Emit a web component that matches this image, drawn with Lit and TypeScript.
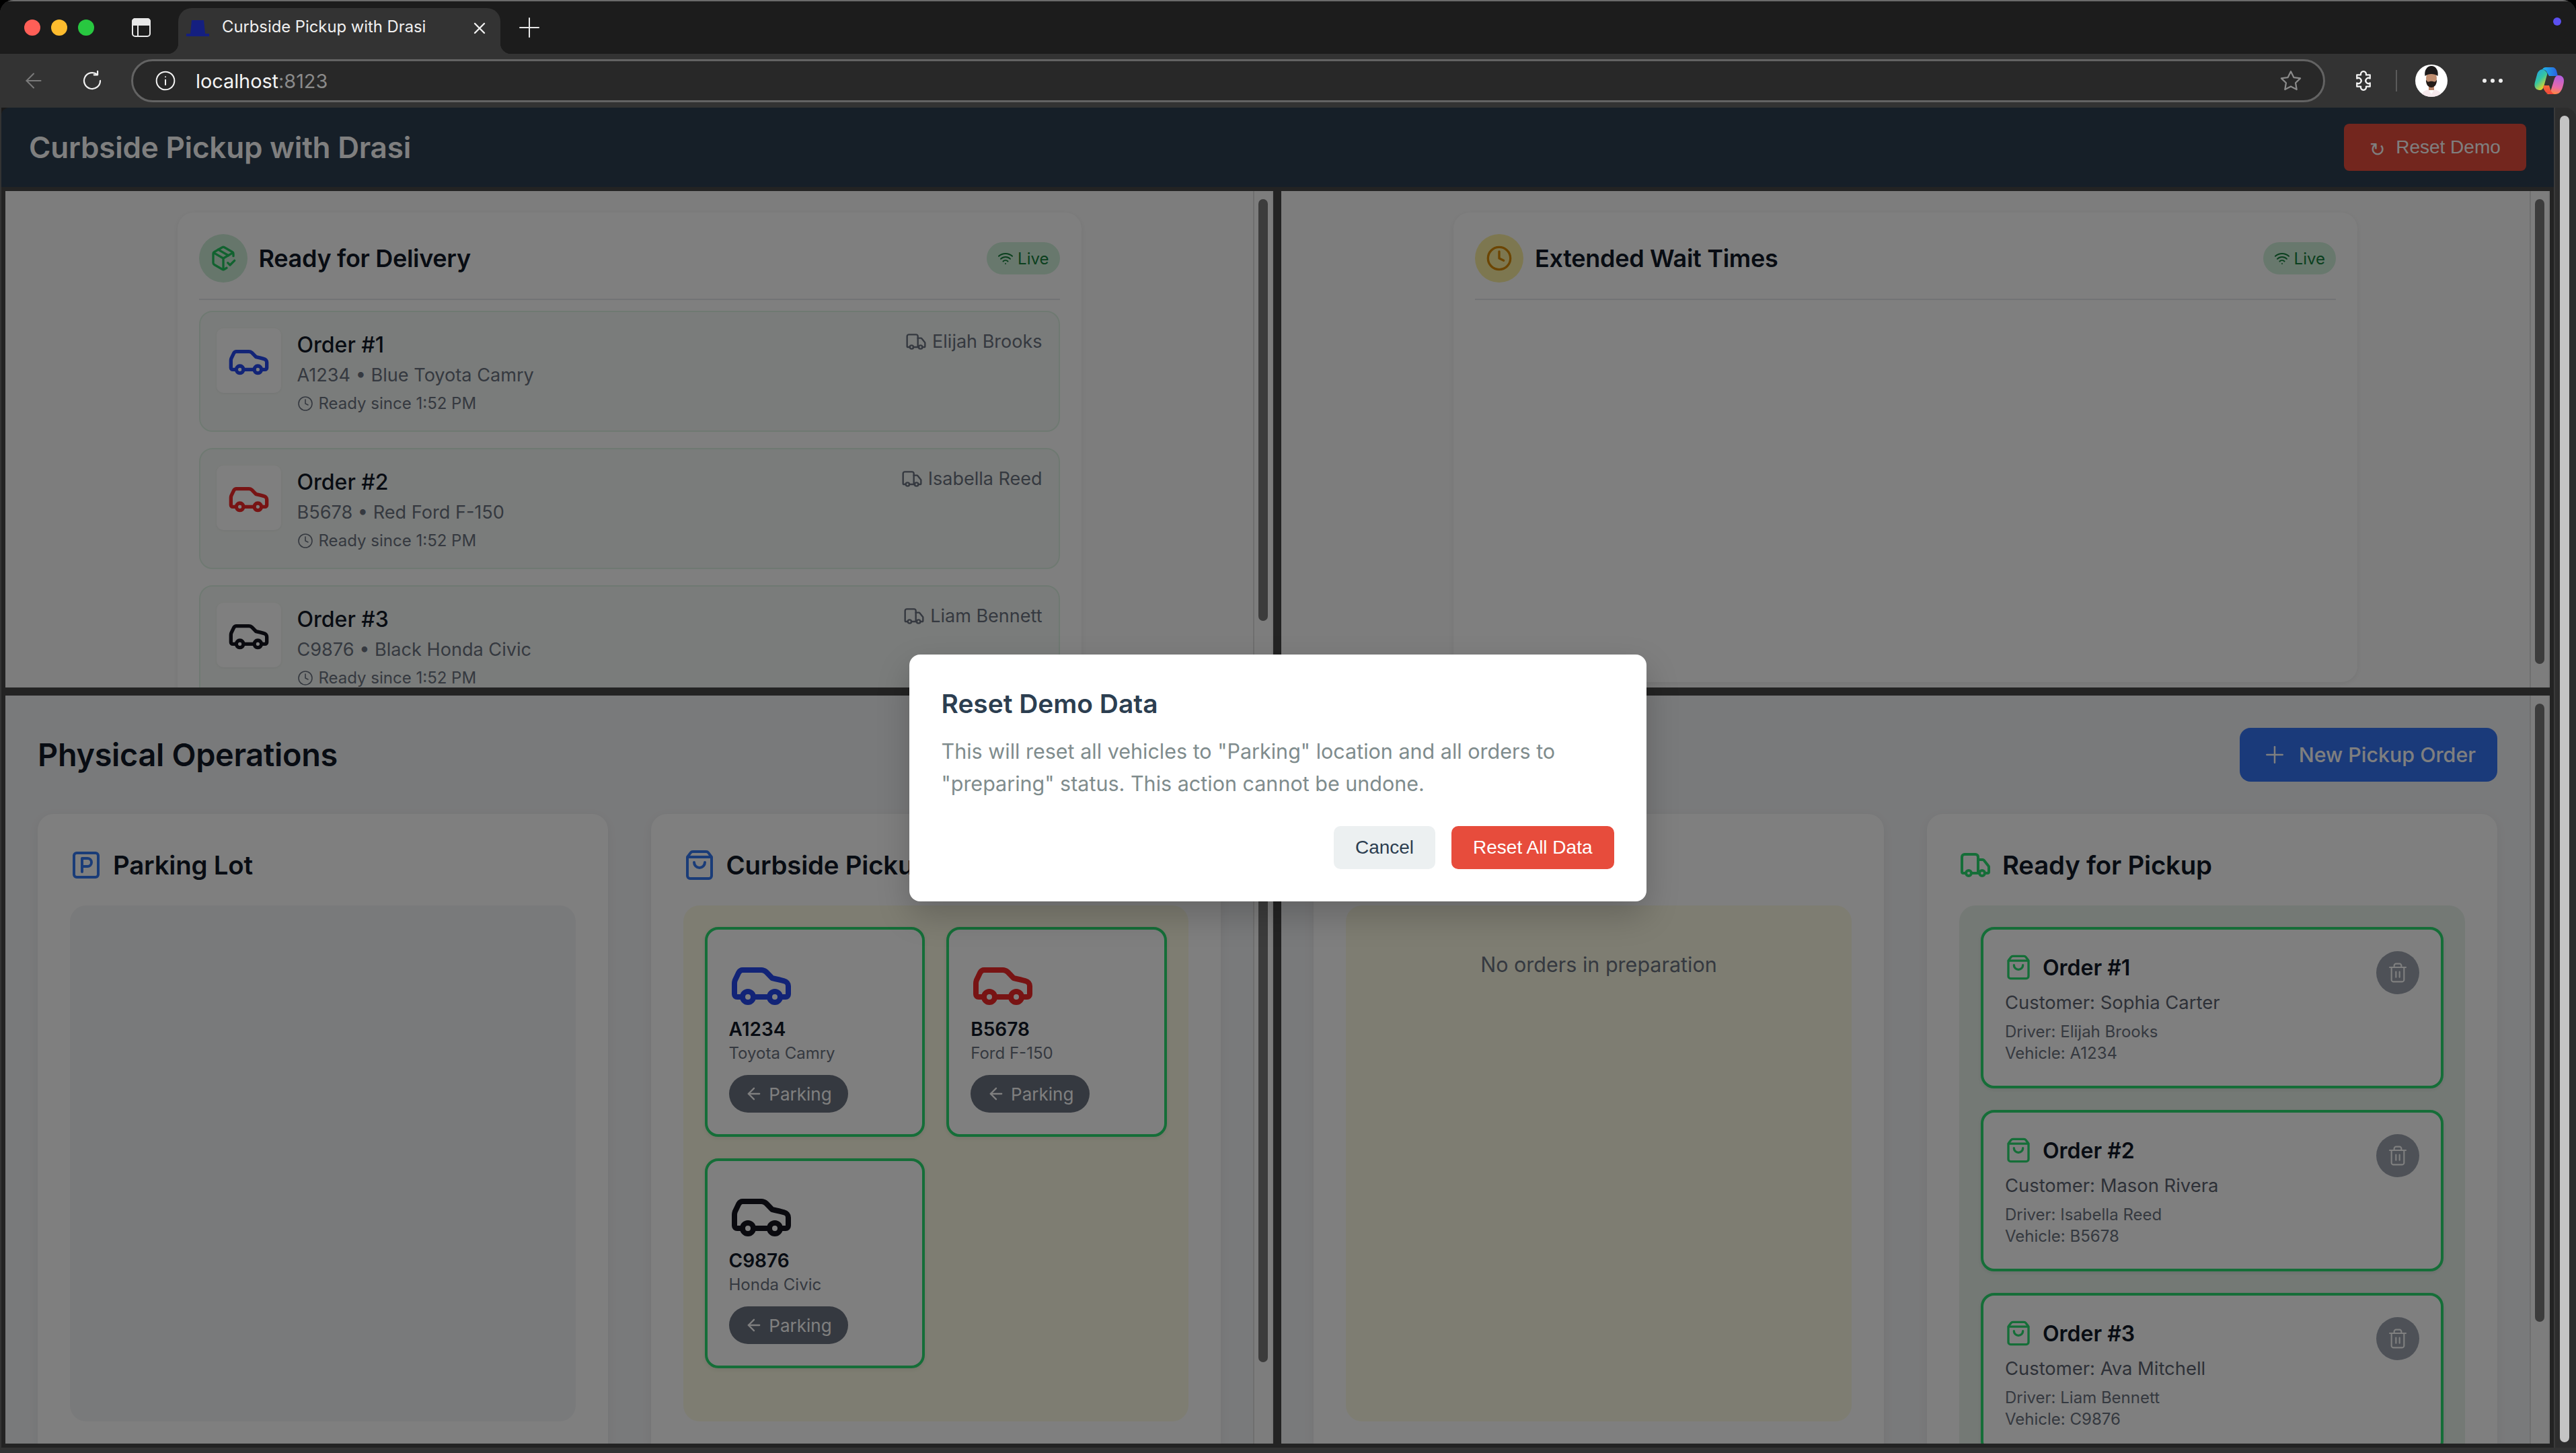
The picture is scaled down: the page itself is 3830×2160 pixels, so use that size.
import { LitElement, html, css, svg } from "lit";
import { customElement } from "lit/decorators.js";

const ICONS: Record<string, unknown> = {
  car: svg`<path d="M19 17h2c.6 0 1-.4 1-1v-3c0-.9-.7-1.7-1.5-1.9C18.7 10.6 16 10 16 10s-1.3-1.4-2.2-2.3c-.5-.4-1.1-.7-1.8-.7H5c-.6 0-1.1.4-1.4.9l-1.4 2.9A3.7 3.7 0 0 0 2 12v4c0 .6.4 1 1 1h2"/><circle cx="7" cy="17" r="2"/><path d="M9 17h6"/><circle cx="17" cy="17" r="2"/>`,
  bag: svg`<path d="M16 10a4 4 0 0 1-8 0"/><path d="M3.103 6.034h17.794"/><path d="M3.4 5.467a2 2 0 0 0-.4 1.2V20a2 2 0 0 0 2 2h14a2 2 0 0 0 2-2V6.667a2 2 0 0 0-.4-1.2l-2-2.667A2 2 0 0 0 17 2H7a2 2 0 0 0-1.6.8z"/>`,
  truck: svg`<path d="M14 18V6a2 2 0 0 0-2-2H4a2 2 0 0 0-2 2v11a1 1 0 0 0 1 1h2"/><path d="M15 18H9"/><path d="M19 18h2a1 1 0 0 0 1-1v-3.65a1 1 0 0 0-.22-.624l-3.48-4.35A1 1 0 0 0 17.52 8H14"/><circle cx="17" cy="18" r="2"/><circle cx="7" cy="18" r="2"/>`,
  clock: svg`<circle cx="12" cy="12" r="10"/><polyline points="12 6 12 12 16 14"/>`,
  wifi: svg`<path d="M12 20h.01"/><path d="M2 8.82a15 15 0 0 1 20 0"/><path d="M5 12.859a10 10 0 0 1 14 0"/><path d="M8.5 16.429a5 5 0 0 1 7 0"/>`,
  pack: svg`<path d="m16 16 2 2 4-4"/><path d="M21 10V8a2 2 0 0 0-1-1.73l-7-4a2 2 0 0 0-2 0l-7 4A2 2 0 0 0 3 8v8a2 2 0 0 0 1 1.73l7 4a2 2 0 0 0 2 0l2-1.14"/><path d="m7.5 4.27 9 5.15"/><path d="M3.29 7 12 12l8.71-5"/><path d="M12 22V12"/>`,
  trash: svg`<path d="M3 6h18"/><path d="M19 6v14c0 1-1 2-2 2H7c-1 0-2-1-2-2V6"/><path d="M8 6V4c0-1 1-2 2-2h4c1 0 2 1 2 2v2"/><line x1="10" x2="10" y1="11" y2="17"/><line x1="14" x2="14" y1="11" y2="17"/>`,
  arrow: svg`<path d="m12 19-7-7 7-7"/><path d="M19 12H5"/>`,
  plus: svg`<path d="M5 12h14"/><path d="M12 5v14"/>`,
  park: svg`<rect width="18" height="18" x="3" y="3" rx="2"/><path d="M9 17V7h4a3 3 0 0 1 0 6H9"/>`,
  reload: svg`<path d="M20 12a8 8 0 1 1-3-6.2"/><path d="M17.4 2.6v3.6h-3.6"/>`,
  info: svg`<circle cx="12" cy="12" r="10"/><path d="M12 16.5v-5.5"/><path d="M12 7.6h.01"/>`,
  star: svg`<path d="M12 2.8l2.9 5.9 6.5.9-4.7 4.6 1.1 6.5-5.8-3.1-5.8 3.1 1.1-6.5-4.7-4.6 6.5-.9z"/>`,
  puzzle: svg`<path d="M5.5 6.2h3.9a2.7 2.7 0 1 1 5.2 0h3.9v3.6a2.7 2.7 0 1 0 0 4.4v3.6h-3.9a2.7 2.7 0 1 1-5.2 0H5.5v-3.6a2.7 2.7 0 1 0 0-4.4z"/>`,
};

const icon = (name: string, cls = "") =>
  html`<svg class="ic ${cls}" viewBox="0 0 24 24" fill="none" stroke="currentColor" stroke-width="2" stroke-linecap="round" stroke-linejoin="round">${ICONS[name]}</svg>`;

const ORDERS = [
  { id: 1, plate: "A1234", color: "Blue", model: "Toyota Camry", cls: "blue", driver: "Elijah Brooks", customer: "Sophia Carter" },
  { id: 2, plate: "B5678", color: "Red", model: "Ford F-150", cls: "red", driver: "Isabella Reed", customer: "Mason Rivera" },
  { id: 3, plate: "C9876", color: "Black", model: "Honda Civic", cls: "black", driver: "Liam Bennett", customer: "Ava Mitchell" },
];

@customElement("app-root")
export class AppRoot extends LitElement {
  static styles = css`
    :host { display: block; width: 3830px; height: 2160px; overflow: hidden; background: #000; font-family: Inter, "Liberation Sans", sans-serif; }
    * { box-sizing: border-box; }
    .ic { display: block; flex: none; }
    .window { width: 3830px; height: 2160px; display: flex; flex-direction: column; background: #333; border-radius: 20px 20px 0 0; overflow: hidden; }

    .tabs { height: 80px; flex: none; display: flex; align-items: center; background: #1c1c1c; border-top: 2px solid #6a6a6a; }
    .light { width: 24px; height: 24px; border-radius: 50%; margin-right: 16px; flex: none; }
    .light.r { background: #ff5f57; margin-left: 36px; }
    .light.y { background: #febc2e; }
    .light.g { background: #28c840; }
    .side { width: 28px; height: 28px; margin-left: 40px; flex: none; color: #e8e8e8; }
    .tab { position: relative; align-self: flex-end; margin-left: 41px; width: 479px; height: 68px; background: #333; border-radius: 20px 20px 0 0; display: flex; align-items: center; padding-left: 12px; color: #f0f0f0; flex: none; }
    .tab::before, .tab::after { content: ""; position: absolute; bottom: 0; width: 16px; height: 16px; }
    .tab::before { left: -16px; background: radial-gradient(circle at 0 0, #1c1c1c 16px, #333 16.5px); }
    .tab::after { right: -16px; background: radial-gradient(circle at 100% 0, #1c1c1c 16px, #333 16.5px); }
    .fav { width: 34px; height: 24px; flex: none; margin-bottom: 8px; }
    .tab-title { margin-left: 19px; font-size: 23.8px; flex: 1; white-space: nowrap; margin-bottom: 13px; }
    .tab-x { width: 24px; height: 24px; margin: 0 19px 8px 0; flex: none; }
    .new { width: 32px; height: 32px; margin-left: 27px; color: #e8e8e8; flex: none; }
    .pdot { width: 12px; height: 12px; border-radius: 50%; background: #5b50f0; margin: -18px 22px 0 auto; }

    .toolbar { height: 80px; flex: none; display: flex; align-items: center; background: #333; padding: 0 18px 0 32px; }
    .back { width: 36px; height: 36px; color: #7a7a7a; stroke-width: 1.4; }
    .reload { width: 36px; height: 36px; margin-left: 51px; color: #f0f0f0; stroke-width: 1.5; }
    .url { flex: 1; height: 64px; margin-left: 40px; border: 3px solid #636363; border-radius: 32px; background: #282828; display: flex; align-items: center; padding: 0 30px 0 32px; font-size: 28.8px; color: #f4f4f4; }
    .url .info { width: 32px; height: 32px; stroke-width: 1.5; margin-right: 29px; }
    .url .port { color: #8a8a8a; }
    .url .star { width: 36px; height: 36px; margin-left: auto; color: #8a8a8a; stroke-width: 1.5; }
    .puzzle { width: 36px; height: 36px; margin-left: 39px; color: #f4f4f4; stroke-width: 1.5; }
    .sep { width: 2px; height: 32px; margin-left: 30px; background: #5a5a5a; flex: none; }
    .avatar { width: 48px; height: 48px; margin-left: 27px; flex: none; }
    .dots { display: flex; gap: 6px; margin-left: 52px; flex: none; }
    .dots i { width: 6px; height: 6px; border-radius: 50%; background: #eee; }
    .copilot { width: 44px; height: 40px; margin-left: 47px; flex: none; }

    .body { flex: 1; min-height: 0; display: flex; position: relative; }
    .page { width: 3795px; height: 1992px; margin-left: 2px; background: #464646; display: flex; flex-direction: column; flex: none; border-radius: 12px 0 0 0; overflow: hidden; }
    .outer-bar { flex: 1; height: 1992px; background: #2d2d2d; border-left: 2px solid #3a3a3a; padding: 12px 0 8px 7px; border-radius: 0 16px 0 0; }
    .outer-bar i { display: block; width: 14px; height: 100%; border-radius: 7px; background: #c4c4c4; }

    .app-head { height: 118px; flex: none; background: #2c3e50; display: flex; align-items: center; justify-content: space-between; padding: 0 41px; }
    .app-head h1 { margin: 0; font-size: 44px; font-weight: 600; color: #fff; letter-spacing: -0.2px; }
    .reset { height: 70px; width: 271px; border: 0; border-radius: 8px; background: #e74c3c; color: #fff; font: 28px "Liberation Sans", Arial, sans-serif; display: flex; align-items: center; justify-content: center; gap: 16px; padding: 0; }
    .reset span { font-size: 28px; padding-top: 6px; }

    .panes { flex: 1; min-height: 0; display: grid; grid-template-columns: 1885px 1886px; grid-template-rows: 738px 1112px; gap: 12px; padding: 6px; }
    .pane { display: flex; overflow: hidden; min-width: 0; min-height: 0; }
    .scroll { flex: 1; min-width: 0; overflow: hidden; }
    .top .scroll { background: #fbfbfb; padding-top: 32px; }
    .bottom .scroll { background: #f3f4f6; padding: 48px 48px 0; }
    .track { width: 30px; flex: none; background: #fbfbfb; border-left: 2px solid #dedede; border-right: 2px solid #eeeeee; padding: 12px 0 0 6px; }
    .thumb { width: 14px; border-radius: 7px; background: #787878; }

    .card { width: 1344px; margin: 0 auto; background: #fff; border-radius: 24px; padding: 32px; box-shadow: 0 2px 10px rgba(0,0,0,.07); min-height: 698px; }
    .card-head { display: flex; align-items: center; padding-bottom: 24px; border-bottom: 2px solid #e5e7eb; margin-bottom: 16px; }
    .circle { width: 72px; height: 72px; border-radius: 50%; display: flex; align-items: center; justify-content: center; margin-right: 17px; flex: none; }
    .circle.green { background: #cdecd7; color: #22c55e; }
    .circle.yellow { background: #fbefa0; color: #d98a04; }
    .circle .ic { width: 40px; height: 40px; }
    .card-head h2 { margin: 0; font-size: 36px; font-weight: 600; color: #111827; letter-spacing: -0.3px; }
    .live { margin-left: auto; height: 48px; padding: 0 16px; border-radius: 24px; background: #d0f0da; color: #16803d; display: flex; align-items: center; gap: 6px; font-size: 24px; font-weight: 400; }
    .live .ic { width: 24px; height: 24px; }

    .item { height: 180px; margin-bottom: 24px; border: 2px solid #dff3e4; border-radius: 20px; background: #f5f9f6; padding: 24px; display: flex; }
    .thumbbox { width: 96px; height: 96px; background: #fff; border-radius: 10px; box-shadow: 0 1px 4px rgba(0,0,0,.06); display: flex; align-items: center; justify-content: center; flex: none; margin-right: 24px; }
    .thumbbox .ic { width: 64px; height: 64px; }
    .blue { color: #2448ef; }
    .red { color: #f02828; }
    .black { color: #14141f; }
    .item-main { flex: 1; min-width: 0; }
    .item-title { font-size: 32px; line-height: 49px; font-weight: 500; color: #111827; }
    .item-sub { font-size: 27.1px; line-height: 41px; color: #6b7280; }
    .item-time { font-size: 24px; line-height: 32px; margin-top: 6px; color: #6b7280; display: flex; align-items: center; gap: 8px; }
    .item-time .ic { width: 24px; height: 24px; stroke-width: 1.6; }
    .item-driver { font-size: 27px; line-height: 40px; color: #6b7280; display: flex; align-items: center; gap: 8px; align-self: flex-start; }
    .item-driver .ic { width: 32px; height: 32px; stroke-width: 1.8; }

    .bar { height: 80px; display: flex; align-items: center; justify-content: space-between; margin-bottom: 48px; }
    .bar.end { justify-content: flex-end; }
    .bar h2 { margin: 0; font-size: 46.8px; font-weight: 600; color: #111827; letter-spacing: -0.3px; }
    .add { height: 80px; border: 0; border-radius: 16px; padding: 0 32px; background: #3575f5; color: #fff; display: flex; align-items: center; gap: 16px; font: 500 30.4px Inter, sans-serif; }
    .add .ic { width: 40px; height: 40px; stroke-width: 1.5; }
    .cols { display: grid; grid-template-columns: 1fr 1fr; gap: 64px; }
    .col { background: #fff; border-radius: 24px; padding: 48px; box-shadow: 0 4px 16px rgba(0,0,0,.06); height: 960px; }
    .col-head { height: 56px; display: flex; align-items: center; gap: 16px; margin-bottom: 32px; }
    .col-head .ic { width: 48px; height: 48px; }
    .col-head h3 { margin: 0; font-size: 38.4px; font-weight: 600; color: #111827; white-space: nowrap; letter-spacing: -0.2px; }
    .col-head .pk { color: #3578f0; }
    .col-head .gr { color: #2adc70; }
    .zone { height: 767px; border-radius: 24px; padding: 32px; overflow: hidden; }
    .zone.gray { background: #f3f4f6; }
    .zone.yellow { background: #fcfbe4; }
    .zone.green { background: #e9f3eb; height: 840px; }
    .vehicles { display: grid; grid-template-columns: 1fr 1fr; gap: 32px; }
    .vehicle { height: 312px; background: #fff; border: 4px solid #2adc70; border-radius: 20px; padding: 32px; box-shadow: 0 2px 6px rgba(0,0,0,.08); }
    .vehicle > .ic { width: 96px; height: 96px; }
    .plate { font-size: 28px; line-height: 40px; font-weight: 600; color: #111827; }
    .model { font-size: 24px; line-height: 32px; color: #6b7280; }
    .pill { height: 56px; margin-top: 16px; width: 177px; border: 0; border-radius: 28px; background: #6b7280; color: #fff; display: flex; align-items: center; justify-content: center; gap: 8px; font: 26px Inter, sans-serif; padding: 0; }
    .pill .ic { width: 28px; height: 28px; }
    .empty { text-align: center; font-size: 30.5px; line-height: 48px; color: #6b7280; padding-top: 32px; }
    .order { height: 240px; background: #fff; border: 4px solid #2adc70; border-radius: 20px; padding: 32px; margin-bottom: 32px; display: flex; box-shadow: 0 2px 6px rgba(0,0,0,.08); }
    .order-main { flex: 1; min-width: 0; }
    .order-head { height: 48px; display: flex; align-items: center; gap: 16px; font-size: 32px; font-weight: 600; color: #111827; }
    .order-head .ic { width: 40px; height: 40px; color: #2adc70; }
    .cust { font-size: 27.4px; line-height: 40px; margin-top: 8px; color: #5c6370; }
    .meta { font-size: 24px; line-height: 32px; color: #6b7280; }
    .meta.first { margin-top: 8px; }
    .del { width: 64px; height: 64px; border: 0; border-radius: 50%; background: #9ca3af; color: #fff; display: flex; align-items: center; justify-content: center; flex: none; padding: 0; }
    .del .ic { width: 32px; height: 32px; stroke-width: 1.6; }

    .overlay { position: absolute; left: 2px; top: 0; width: 3795px; height: 1992px; background: rgba(0,0,0,.5); display: flex; align-items: center; justify-content: center; }
    .dialog { width: 1096px; height: 367px; background: #fff; border-radius: 16px; padding: 48px; box-shadow: 0 20px 50px rgba(0,0,0,.2); display: flex; flex-direction: column; }
    .dialog h2 { margin: 0 0 22px; font-size: 38.9px; line-height: 50px; font-weight: 600; color: #2c3e50; }
    .dialog p { margin: 0; font-size: 30.5px; line-height: 48px; color: #7f8c8d; }
    .actions { margin-top: 39px; display: flex; justify-content: flex-end; gap: 24px; }
    .actions button { height: 64px; padding: 0 32px; border: 0; border-radius: 10px; font: 28px "Liberation Sans", Arial, sans-serif; }
    .cancel { background: #ecf0f1; color: #2c3e50; }
    .confirm { background: #e74c3c; color: #fff; }
  `;

  private thumb(h: number) {
    return html`<div class="track"><div class="thumb" style="height:${h}px"></div></div>`;
  }

  private avatar() {
    return html`<svg class="avatar" viewBox="0 0 48 48">
      <defs><clipPath id="av"><circle cx="24" cy="24" r="24"/></clipPath></defs>
      <g clip-path="url(#av)">
        <rect width="48" height="48" fill="#fff"/>
        <path d="M8 48c1-8 8-11 16-11s15 3 16 11z" fill="#f6e9ec"/>
        <path d="M24 44l-5-8h10z" fill="#fff"/>
        <rect x="20" y="28" width="8" height="10" fill="#b98468"/>
        <ellipse cx="24" cy="20" rx="8" ry="10" fill="#c08e70"/>
        <path d="M14.5 17C13 8 18 2 24 2s11 6 9.500 15c-5-4-14-4-19 0z" fill="#1c1a1a"/>
        <path d="M16 22c1 3 3 4 4 3.500 2-1 6-1 8 0 1 .5 3-.5 4-3.500 .5 7-3 12-8 12s-8.500-5-8-12z" fill="#241c18"/>
      </g></svg>`;
  }

  private copilot() {
    return html`<svg class="copilot" viewBox="0 0 44 40">
      <defs>
        <linearGradient id="cp1" x1="0" y1="0" x2="0.6" y2="1"><stop offset="0" stop-color="#1f9cf0"/><stop offset=".55" stop-color="#35c6a0"/><stop offset="1" stop-color="#f2d51c"/></linearGradient>
        <linearGradient id="cp2" x1="0.6" y1="0" x2="0.4" y2="1"><stop offset="0" stop-color="#b15ee0"/><stop offset=".6" stop-color="#e86aa8"/><stop offset="1" stop-color="#ff8a3c"/></linearGradient>
        <linearGradient id="cp3" x1="0" y1="0" x2="1" y2="0"><stop offset="0" stop-color="#1fb6e8"/><stop offset="1" stop-color="#2a5fe0"/></linearGradient>
        <linearGradient id="cp4" x1="0" y1="0" x2="0" y2="1"><stop offset="0" stop-color="#f56a3a"/><stop offset="1" stop-color="#f0443a"/></linearGradient>
      </defs>
      <path d="M12 3c1-2 3-3 5-3h10c3 0 5 2 6 5l2 8H22L19 8c-1-3-3-4-7-5z" fill="url(#cp3)"/>
      <path d="M12 3C7 4 5 7 4 11L1 22c-2 7 1 12 7 12 3 0 5-2 6-5l5-18c1-3-3-7-7-8z" fill="url(#cp1)"/>
      <path d="M36 12c5 0 8 3 8 8 0 3-1 7-2 10-2 6-5 10-11 10H17c4 0 7-3 8-7l5-16c1-3 3-5 6-5z" fill="url(#cp2)"/>
      <path d="M13 30c2 5 5 10 11 10h6c-3-1-5-4-6-7l-2-6h-8z" fill="url(#cp4)"/>
    </svg>`;
  }

  private chrome() {
    return html`
      <div class="tabs">
        <span class="light r"></span><span class="light y"></span><span class="light g"></span>
        <svg class="side" viewBox="0 0 28 28" fill="none" stroke="currentColor" stroke-width="2"><rect x="1" y="1" width="26" height="26" rx="4"/><path d="M1 5a4 4 0 0 1 4-4h18a4 4 0 0 1 4 4v5H1z" fill="currentColor"/><path d="M9 10v17"/></svg>
        <div class="tab">
          <svg class="fav" viewBox="0 0 34 24"><path d="M8 0h18l2 20h6v4H0v-4h6z" fill="#141f80"/></svg>
          <span class="tab-title">Curbside Pickup with Drasi</span>
          <svg class="tab-x" viewBox="0 0 24 24" stroke="#f0f0f0" stroke-width="2.4" stroke-linecap="round"><path d="M5 5l14 14M19 5L5 19"/></svg>
        </div>
        <svg class="new" viewBox="0 0 32 32" stroke="currentColor" stroke-width="2" stroke-linecap="round"><path d="M2 16h28M16 2v28"/></svg>
        <span class="pdot"></span>
      </div>
      <div class="toolbar">
        ${icon("arrow", "back")}
        ${icon("reload", "reload")}
        <div class="url">
          ${icon("info", "info")}
          <span>localhost<span class="port">:8123</span></span>
          ${icon("star", "star")}
        </div>
        ${icon("puzzle", "puzzle")}
        <span class="sep"></span>
        ${this.avatar()}
        <div class="dots"><i></i><i></i><i></i></div>
        ${this.copilot()}
      </div>`;
  }

  private delivery() {
    return ORDERS.map(
      (o) => html`<div class="item">
        <div class="thumbbox">${icon("car", o.cls)}</div>
        <div class="item-main">
          <div class="item-title">Order #${o.id}</div>
          <div class="item-sub">${o.plate} • ${o.color} ${o.model}</div>
          <div class="item-time">${icon("clock")}Ready since 1:52 PM</div>
        </div>
        <div class="item-driver">${icon("truck")}${o.driver}</div>
      </div>`
    );
  }

  private live() {
    return html`<div class="live">${icon("wifi")}Live</div>`;
  }

  render() {
    return html`<div class="window">
      ${this.chrome()}
      <div class="body">
        <div class="page">
          <header class="app-head">
            <h1>Curbside Pickup with Drasi</h1>
            <button class="reset"><span>↻</span>Reset Demo</button>
          </header>
          <div class="panes">
            <section class="pane top">
              <div class="scroll">
                <div class="card">
                  <div class="card-head">
                    <div class="circle green">${icon("pack")}</div>
                    <h2>Ready for Delivery</h2>
                    ${this.live()}
                  </div>
                  ${this.delivery()}
                </div>
              </div>
              ${this.thumb(627)}
            </section>
            <section class="pane top">
              <div class="scroll">
                <div class="card">
                  <div class="card-head">
                    <div class="circle yellow">${icon("clock")}</div>
                    <h2>Extended Wait Times</h2>
                    ${this.live()}
                  </div>
                </div>
              </div>
              ${this.thumb(691)}
            </section>
            <section class="pane bottom">
              <div class="scroll">
                <div class="bar"><h2>Physical Operations</h2></div>
                <div class="cols">
                  <div class="col">
                    <div class="col-head">${icon("park", "pk")}<h3>Parking Lot</h3></div>
                    <div class="zone gray"></div>
                  </div>
                  <div class="col">
                    <div class="col-head">${icon("bag", "pk")}<h3>Curbside Pickup</h3></div>
                    <div class="zone yellow">
                      <div class="vehicles">
                        ${ORDERS.map(
                          (o) => html`<div class="vehicle">
                            ${icon("car", o.cls)}
                            <div class="plate">${o.plate}</div>
                            <div class="model">${o.model}</div>
                            <button class="pill">${icon("arrow")}Parking</button>
                          </div>`
                        )}
                      </div>
                    </div>
                  </div>
                </div>
              </div>
              ${this.thumb(979)}
            </section>
            <section class="pane bottom">
              <div class="scroll">
                <div class="bar end"><button class="add">${icon("plus")}New Pickup Order</button></div>
                <div class="cols">
                  <div class="col">
                    <div class="col-head"></div>
                    <div class="zone yellow"><div class="empty">No orders in preparation</div></div>
                  </div>
                  <div class="col">
                    <div class="col-head">${icon("truck", "gr")}<h3>Ready for Pickup</h3></div>
                    <div class="zone green">
                      ${ORDERS.map(
                        (o) => html`<div class="order">
                          <div class="order-main">
                            <div class="order-head">${icon("bag")}Order #${o.id}</div>
                            <div class="cust">Customer: ${o.customer}</div>
                            <div class="meta first">Driver: ${o.driver}</div>
                            <div class="meta">Vehicle: ${o.plate}</div>
                          </div>
                          <button class="del">${icon("trash")}</button>
                        </div>`
                      )}
                    </div>
                  </div>
                </div>
              </div>
              ${this.thumb(919)}
            </section>
          </div>
        </div>
        <div class="outer-bar"><i></i></div>
        <div class="overlay">
          <div class="dialog">
            <h2>Reset Demo Data</h2>
            <p>This will reset all vehicles to "Parking" location and all orders to "preparing" status. This action cannot be undone.</p>
            <div class="actions">
              <button class="cancel">Cancel</button>
              <button class="confirm">Reset All Data</button>
            </div>
          </div>
        </div>
      </div>
    </div>`;
  }
}
